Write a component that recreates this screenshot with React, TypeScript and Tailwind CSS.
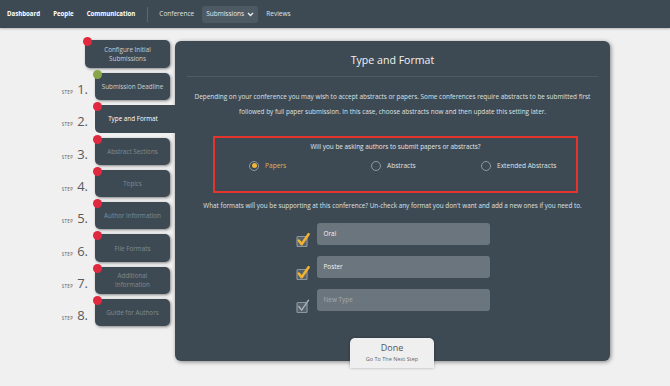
import React from "react";

const font = { fontFamily: '"Open Sans", "Noto Sans", "Liberation Sans", sans-serif' };

type Step = { n: number; label: React.ReactNode; dot: "red" | "green"; tone: "light" | "active" | "dim" };

const steps: Step[] = [
  { n: 1, label: "Submission Deadline", dot: "green", tone: "light" },
  { n: 2, label: "Type and Format", dot: "red", tone: "active" },
  { n: 3, label: "Abstract Sections", dot: "red", tone: "dim" },
  { n: 4, label: "Topics", dot: "red", tone: "dim" },
  { n: 5, label: "Author Information", dot: "red", tone: "dim" },
  { n: 6, label: "File Formats", dot: "red", tone: "dim" },
  { n: 7, label: (<>Additional<br />Information</>), dot: "red", tone: "dim" },
  { n: 8, label: "Guide for Authors", dot: "red", tone: "dim" },
];

function Dot({ color }: { color: "red" | "green" }) {
  return (
    <span
      className={
        "absolute -left-[2px] -top-[3px] w-[9px] h-[9px] rounded-full " +
        (color === "red" ? "bg-[#e0293f]" : "bg-[#8aa64a]")
      }
    />
  );
}

function Check({ on }: { on: boolean }) {
  return (
    <svg width="14" height="16" viewBox="0 0 14 16" className="shrink-0 -mb-[2px]">
      <rect x="1" y="5.5" width="10" height="10" rx="1" fill="#56616a" stroke="#8d969d" strokeWidth="1.2" />
      <path
        d="M2.8 9.5 L5.6 13.2 L12.6 3.2"
        fill="none"
        stroke={on ? "#f0b230" : "#aab2b8"}
        strokeWidth={on ? 2.6 : 1.4}
        strokeLinecap="round"
        strokeLinejoin="round"
      />
    </svg>
  );
}

function Radio({ on, label }: { on: boolean; label: string }) {
  return (
    <div className="flex items-center gap-[6px]">
      <span className="w-[10px] h-[10px] rounded-full border border-[#8f989f] flex items-center justify-center">
        {on && <span className="w-[5px] h-[5px] rounded-full bg-[#efb43e]" />}
      </span>
      <span className={"text-[6.6px] " + (on ? "text-[#dcb45a]" : "text-[#dfe3e6]")}>{label}</span>
    </div>
  );
}

export default function App() {
  return (
    <div className="w-[670px] h-[386px] overflow-hidden bg-[#f0f0f0] relative" style={font}>
      {/* top nav */}
      <div className="h-[28px] bg-[#3e4a53] flex items-center pl-[7px] text-[6.5px] shadow-[0_1px_2px_rgba(0,0,0,0.25)] relative z-20">
        <span className="font-bold text-white text-[6.1px]">Dashboard</span>
        <span className="font-bold text-white text-[6.1px] ml-[13px]">People</span>
        <span className="font-bold text-white text-[6.1px] ml-[13px]">Communication</span>
        <span className="w-px h-[15px] bg-[#5b6770] ml-[12px]" />
        <span className="text-[#dfe3e6] ml-[11px]">Conference</span>
        <span className="ml-[8px] bg-[#4d5963] rounded-[3px] h-[17px] px-[4px] flex items-center gap-[3px] text-[#e8ebed]">
          Submissions
          <svg width="7" height="5" viewBox="0 0 7 5">
            <path d="M1 1 L3.5 3.5 L6 1" fill="none" stroke="#e8ebed" strokeWidth="1.4" />
          </svg>
        </span>
        <span className="text-[#dfe3e6] ml-[8px]">Reviews</span>
      </div>

      <div className="flex">
        {/* left steps */}
        <div className="w-[170px] flex flex-col items-end pt-[12px] gap-[5px]">
          <div className="relative w-[85px] h-[28px] rounded-[5px] bg-[#3e4a53] shadow-[1px_1px_3px_rgba(0,0,0,0.45)] flex items-center justify-center text-center text-[6.3px] leading-[9px] text-[#c9cfd3]">
            <Dot color="red" />
            <span>Configure Initial<br />Submissions</span>
          </div>
          {steps.map((s) => (
            <div key={s.n} className="flex items-center h-[27.3px]">
              <div className="flex items-baseline text-[#5a5a5a] mr-[7px] mt-[6px]">
                <span className="text-[4.5px] tracking-[0.3px] mr-[4px]">STEP</span>
                <span className="text-[13px] leading-none">{s.n}.</span>
              </div>
              <div
                className={
                  "relative h-full rounded-[5px] bg-[#3e4a53] flex items-center justify-center text-center text-[6.3px] leading-[9px] " +
                  (s.tone === "active"
                    ? "w-[82px] -mr-[7px] rounded-r-none z-10 text-white pr-[6px]"
                    : "w-[75px] shadow-[1px_1px_3px_rgba(0,0,0,0.45)] " + (s.tone === "light" ? "text-[#c9cfd3]" : "text-[#7f8a92]"))
                }
              >
                <Dot color={s.dot} />
                <span>{s.label}</span>
              </div>
            </div>
          ))}
        </div>

        {/* main panel */}
        <div className="relative ml-[5px] mt-[13px] w-[435px] h-[320px] rounded-[6px] bg-[#3e4a53] shadow-[1px_1px_4px_rgba(0,0,0,0.45)] flex flex-col items-center">
          <div className="h-[35px] flex items-center justify-center text-[10.6px] text-[#f2f2f2] pt-[5px]">Type and Format</div>
          <div className="w-[411px] h-px bg-[#4f5b64]" />
          <p className="mt-[12px] text-[6.4px] leading-[15px] text-[#dde1e4] text-center w-[402px]">
            Depending on your conference you may wish to accept abstracts or papers. Some conferences require abstracts to be submitted first followed by full paper submission. In this case, choose abstracts now and then update this setting later.
          </p>
          <div className="mt-[17px] ml-[6px] w-[365px] h-[57px] border-2 border-[#e3352b] flex flex-col">
            <div className="text-center text-[6.4px] text-[#e3e6e8] mt-[4px]">Will you be asking authors to submit papers or abstracts?</div>
            <div className="flex items-center mt-[9px] pl-[34px]">
              <div className="w-[122px]"><Radio on label="Papers" /></div>
              <div className="w-[110px]"><Radio on={false} label="Abstracts" /></div>
              <div><Radio on={false} label="Extended Abstracts" /></div>
            </div>
          </div>
          <div className="mt-[8px] text-[6.35px] text-[#dde1e4] text-center">
            What formats will you be supporting at this conference? Un-check any format you don't want and add a new ones if you need to.
          </div>
          <div className="mt-[12px] flex flex-col gap-[11px]">
            {[
              { t: "Oral", on: true },
              { t: "Poster", on: true },
              { t: "New Type", on: false },
            ].map((r) => (
              <div key={r.t} className="flex items-end h-[22px] gap-[7px]">
                <Check on={r.on} />
                <div
                  className={
                    "w-[173px] h-[22px] rounded-[3px] bg-[#6b757d] flex items-center pl-[7px] text-[6.4px] " +
                    (r.on ? "text-[#f1f3f4]" : "text-[#a3abb1]")
                  }
                >
                  {r.t}
                </div>
              </div>
            ))}
          </div>

          <div className="absolute left-[175px] -bottom-[7px] w-[84px] h-[30px] rounded-t-[5px] bg-[#efefef] shadow-[0_0_3px_rgba(0,0,0,0.3)] flex flex-col items-center pt-[4px]">
            <span className="text-[9px] leading-[11px] text-[#555]">Done</span>
            <span className="text-[5.5px] leading-[8px] text-[#666] mt-[2px]">Go To The Next Step</span>
          </div>
        </div>
      </div>
    </div>
  );
}
